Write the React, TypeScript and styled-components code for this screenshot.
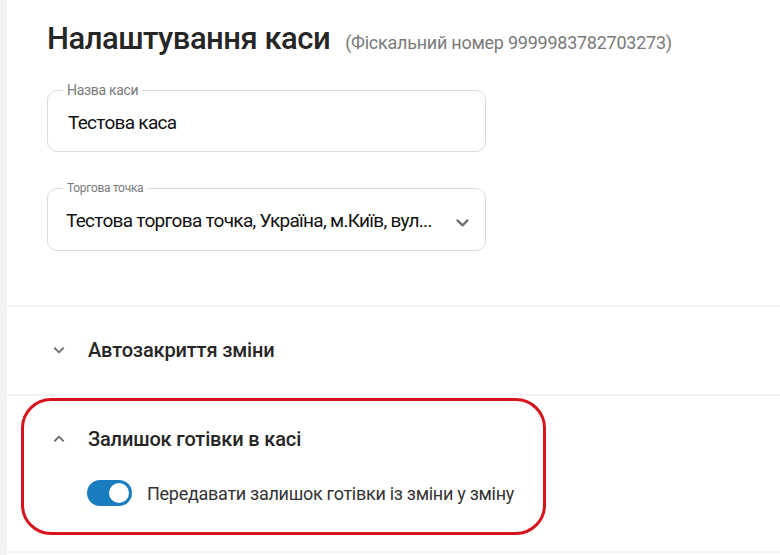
import { createGlobalStyle, styled } from "styled-components";

const GlobalStyle = createGlobalStyle`
  html, body {
    margin: 0;
    padding: 0;
    background: #f2f3f4;
    font-family: Roboto, "Noto Sans", Arial, sans-serif;
    overflow: hidden;
  }
`;

const Page = styled.div`
  position: relative;
  margin-left: 7px;
  display: flex;
  flex-direction: column;
  gap: 2px;
  height: 555px;
`;

const Card = styled.section`
  background: #fff;
  flex-shrink: 0;
`;

const MainCard = styled(Card)`
  height: 305px;
  padding: 20px 0 0 40px;
  box-sizing: border-box;
`;

const TitleRow = styled.div`
  display: flex;
  align-items: baseline;
  gap: 15px;
`;

const Title = styled.h1`
  margin: 0;
  font-size: 31px;
  font-weight: 500;
  color: #262626;
  letter-spacing: -0.5px;
`;

const Fiscal = styled.span`
  font-size: 18px;
  color: #7a7a7a;
  letter-spacing: -0.25px;
`;

const Field = styled.fieldset<{ $top: number }>`
  width: 439px;
  height: 69px;
  box-sizing: border-box;
  margin: ${(p) => p.$top}px 0 0;
  padding: 0 14px 0 20px;
  border: 1px solid #dcdcdc;
  border-radius: 10px;
  display: flex;
  align-items: center;
  justify-content: space-between;
`;

const Legend = styled.legend<{ $size: number }>`
  padding: 0 4px;
  margin-left: -5px;
  font-size: ${(p) => p.$size}px;
  color: #7a7a7a;
  letter-spacing: -0.3px;
  line-height: 1;
`;

const Value = styled.span<{ $shift?: number }>`
  font-size: 19px;
  color: #111;
  letter-spacing: -0.7px;
  white-space: nowrap;
  margin: -3px 0 0 ${(p) => p.$shift ?? 0}px;
`;

const SectionCard = styled(Card)<{ $height: number }>`
  height: ${(p) => p.$height}px;
  padding: 0 0 0 45px;
  box-sizing: border-box;
`;

const SectionHeader = styled.div`
  height: 86px;
  display: flex;
  align-items: center;
  gap: 22px;
`;

const SectionTitle = styled.h2`
  margin: 0;
  font-size: 20px;
  font-weight: 500;
  color: #262626;
  letter-spacing: -0.15px;
`;

const ToggleRow = styled.label`
  display: flex;
  align-items: center;
  gap: 15px;
  margin: -2px 0 0 35px;
`;

const Switch = styled.span<{ $on: boolean }>`
  position: relative;
  width: 45px;
  height: 26px;
  border-radius: 13px;
  background: ${(p) => (p.$on ? "#1a7dc0" : "#bbb")};
  flex-shrink: 0;

  &::after {
    content: "";
    position: absolute;
    top: 3px;
    left: ${(p) => (p.$on ? "22px" : "3px")};
    width: 20px;
    height: 20px;
    border-radius: 50%;
    background: #fff;
  }
`;

const ToggleText = styled.span`
  font-size: 18px;
  color: #333;
  letter-spacing: -0.28px;
`;

const Highlight = styled.div`
  position: absolute;
  left: 14px;
  top: 398px;
  width: 525px;
  height: 137px;
  box-sizing: border-box;
  border: 3px solid #d7141c;
  border-radius: 30px;
  pointer-events: none;
`;

function Chevron({ up = false, size = 14 }: { up?: boolean; size?: number }) {
  return (
    <svg width={size} height={size} viewBox="0 0 24 24" fill="none">
      <path
        d={up ? "M5 15l7-7 7 7" : "M5 9l7 7 7-7"}
        stroke="#6f6f6f"
        strokeWidth="3.2"
        strokeLinecap="round"
        strokeLinejoin="round"
      />
    </svg>
  );
}

export default function App() {
  return (
    <>
      <GlobalStyle />
      <Page>
        <MainCard>
          <TitleRow>
            <Title>Налаштування каси</Title>
            <Fiscal>(Фіскальний номер 9999983782703273)</Fiscal>
          </TitleRow>
          <Field $top={26}>
            <Legend $size={14}>Назва каси</Legend>
            <Value>Тестова каса</Value>
          </Field>
          <Field $top={30}>
            <Legend $size={12}>Торгова точка</Legend>
            <Value $shift={-2}>Тестова торгова точка, Україна, м.Київ, вул...</Value>
            <Chevron size={17} />
          </Field>
        </MainCard>
        <SectionCard $height={87}>
          <SectionHeader>
            <Chevron />
            <SectionTitle>Автозакриття зміни</SectionTitle>
          </SectionHeader>
        </SectionCard>
        <SectionCard $height={155}>
          <SectionHeader>
            <Chevron up />
            <SectionTitle>Залишок готівки в касі</SectionTitle>
          </SectionHeader>
          <ToggleRow>
            <Switch $on />
            <ToggleText>Передавати залишок готівки із зміни у зміну</ToggleText>
          </ToggleRow>
        </SectionCard>
        <Card style={{ flex: 1 }} />
        <Highlight />
      </Page>
    </>
  );
}
